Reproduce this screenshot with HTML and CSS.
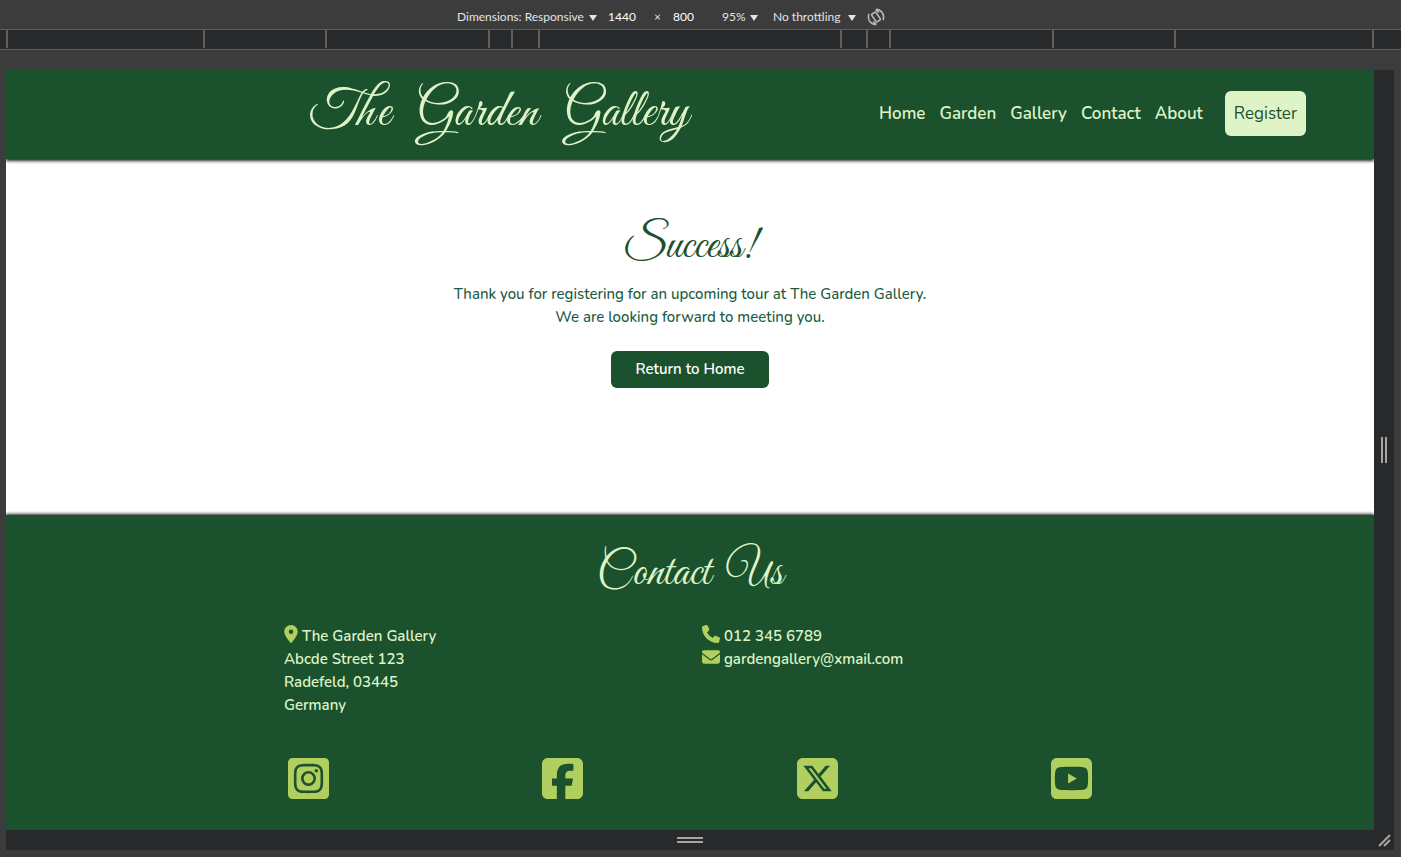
FILE: index.html
```html
<!DOCTYPE html>
<html lang="en">
<head>
<meta charset="utf-8">
<meta name="viewport" content="width=device-width, initial-scale=1">
<title>The Garden Gallery</title>
<link rel="stylesheet" href="styles.css">
</head>
<body>
<div class="toolbar">
  <label class="picker"><select aria-label="Device"><option>Dimensions: Responsive</option></select><svg class="caret" viewBox="0 0 8 6"><path d="M0 0h8L4 6z"/></svg></label>
  <input class="size" type="text" aria-label="Width" value="1440">
  <span class="times">×</span>
  <input class="size" type="text" aria-label="Height" value="800">
  <label class="picker picker-zoom"><select aria-label="Zoom"><option>95%</option></select><svg class="caret" viewBox="0 0 8 6"><path d="M0 0h8L4 6z"/></svg></label>
  <label class="picker"><select aria-label="Throttling"><option>No throttling</option></select><svg class="caret" viewBox="0 0 8 6"><path d="M0 0h8L4 6z"/></svg></label>
  <button class="rotate" type="button" aria-label="Rotate">
    <svg viewBox="0 0 20 20" fill="none" stroke="currentColor" stroke-width="1.8"><rect x="7.200" y="4.800" width="5.600" height="10.400" rx="1.200" transform="rotate(-35 10 10)"/><path d="M10 1.500c4.700 0 8.500 3.800 8.500 8.500 0 1.300-.3 2.500-.8 3.500M10 18.500c-4.700 0-8.500-3.800-8.500-8.500 0-1.300.3-2.500.8-3.500M13 5 9.600 1.600M7 15l3.400 3.400"/></svg>
  </button>
</div>
<div class="ruler"><i></i><i></i><i></i><i></i><i></i><i></i><i></i><i></i><i></i><i></i><i></i></div>

<div class="stage">
  <div class="site">
    <header class="header">
      <p class="brand">The&nbsp;&nbsp; Garden&nbsp;&nbsp; Gallery</p>
      <nav class="nav">
        <a href="#">Home</a>
        <a href="#">Garden</a>
        <a href="#">Gallery</a>
        <a href="#">Contact</a>
        <a href="#">About</a>
        <a class="register" href="#">Register</a>
      </nav>
    </header>
    <main class="main">
      <h1 class="heading">Success!</h1>
      <p class="message">Thank you for registering for an upcoming tour at The Garden Gallery.<br>We are looking forward to meeting you.</p>
      <a class="return" href="#">Return to Home</a>
    </main>
    <footer class="footer">
      <h2 class="heading">Contact&nbsp; Us</h2>
      <div class="details">
        <address>
          <svg class="pin" viewBox="0 0 384 512"><path d="M215.700 499.200C267 435 384 279.400 384 192C384 86 298 0 192 0S0 86 0 192c0 87.400 117 243 168.300 307.200c12.300 15.300 35.100 15.300 47.400 0zM192 128a64 64 0 1 1 0 128 64 64 0 1 1 0-128z"/></svg>
          The Garden Gallery<br>Abcde Street 123<br>Radefeld, 03445<br>Germany
        </address>
        <address>
          <svg viewBox="0 0 512 512"><path d="M164.900 24.600c-7.700-18.600-28-28.500-47.400-23.200l-88 24C12.100 30.200 0 46 0 64C0 311.400 200.600 512 448 512c18 0 33.800-12.100 38.600-29.500l24-88c5.300-19.400-4.600-39.700-23.200-47.400l-96-40c-16.300-6.800-35.200-2.100-46.300 11.600L304.700 368C234.300 334.700 177.300 277.700 144 207.300L193.300 167c13.700-11.200 18.400-30 11.600-46.300l-40-96z"/></svg>
          012 345 6789<br>
          <svg viewBox="0 0 512 512"><path d="M48 64C21.500 64 0 85.500 0 112c0 15.100 7.100 29.300 19.200 38.400L236.800 313.600c11.400 8.500 27 8.500 38.400 0L492.800 150.400c12.100-9.100 19.200-23.300 19.200-38.400c0-26.500-21.500-48-48-48L48 64zM0 176L0 384c0 35.300 28.700 64 64 64l384 0c35.300 0 64-28.700 64-64l0-208L294.400 339.200c-22.800 17.100-54 17.100-76.800 0L0 176z"/></svg>
          gardengallery@xmail.com
        </address>
      </div>
      <div class="social">
        <a href="#" aria-label="Instagram"><svg viewBox="0 32 448 448"><path d="M224 202.700A53.300 53.300 0 1 0 277.400 256 53.400 53.400 0 0 0 224 202.700zm124.700-41a54 54 0 0 0-30.400-30.400c-21-8.300-71-6.400-94.300-6.400s-73.200-1.900-94.300 6.400a54 54 0 0 0-30.400 30.400c-8.300 21-6.400 71.100-6.400 94.300s-1.900 73.300 6.400 94.300a54 54 0 0 0 30.400 30.400c21 8.300 71 6.400 94.300 6.400s73.200 1.900 94.300-6.400a54 54 0 0 0 30.400-30.400c8.400-21 6.400-71.100 6.400-94.300s1.900-73.200-6.400-94.300zM224 338a82 82 0 1 1 82-82 81.900 81.900 0 0 1-82 82zm85.400-148.300a19.100 19.100 0 1 1 19.100-19.100 19.100 19.100 0 0 1-19.100 19.100zM400 32H48A48 48 0 0 0 0 80v352a48 48 0 0 0 48 48h352a48 48 0 0 0 48-48V80a48 48 0 0 0-48-48zm-17.100 290c-1.300 25.600-7.100 48.300-25.900 67s-41.400 24.600-67 25.900c-26.400 1.500-105.600 1.500-132 0-25.600-1.300-48.300-7.200-67-25.900s-24.600-41.400-25.900-67c-1.500-26.400-1.500-105.600 0-132 1.300-25.600 7.100-48.300 25.900-67s41.500-24.600 67-25.800c26.400-1.500 105.600-1.500 132 0 25.600 1.300 48.300 7.100 67 25.900s24.600 41.400 25.900 67c1.500 26.300 1.500 105.400 0 131.900z"/></svg></a>
        <a href="#" aria-label="Facebook"><svg viewBox="0 32 448 448"><path d="M64 32C28.700 32 0 60.700 0 96V416c0 35.300 28.700 64 64 64h98.200V334.200H109.400V256h52.800V222.300c0-87.100 39.400-127.500 125-127.500c16.200 0 44.200 3.200 55.700 6.400V172c-6-.6-16.500-1-29.600-1c-42 0-58.200 15.900-58.200 57.200V256h83.600l-14.400 78.200H255V480H384c35.300 0 64-28.700 64-64V96c0-35.300-28.700-64-64-64H64z"/></svg></a>
        <a href="#" aria-label="X"><svg viewBox="0 32 448 448"><path d="M64 32C28.700 32 0 60.700 0 96V416c0 35.300 28.700 64 64 64H384c35.300 0 64-28.700 64-64V96c0-35.300-28.700-64-64-64H64zm297.100 84L257.300 234.600 379.400 396H283.800L209 298.100 123.300 396H75.800l111-126.900L69.700 116h98l67.700 89.500L313.600 116h47.500zM323.300 367.600L153.400 142.900H125.100L296.900 367.600h26.300z"/></svg></a>
        <a href="#" aria-label="YouTube"><svg viewBox="0 32 448 448"><path d="M282 256.200l-95.200-54.100V310.300L282 256.200zM384 32H64C28.700 32 0 60.700 0 96V416c0 35.300 28.700 64 64 64H384c35.300 0 64-28.700 64-64V96c0-35.300-28.700-64-64-64zm14.400 136.100c7.600 28.600 7.600 88.200 7.600 88.200s0 59.600-7.600 88.100c-4.200 15.800-16.500 27.700-32.200 31.900C337.900 384 224 384 224 384s-113.900 0-142.200-7.600c-15.700-4.200-28-16.100-32.200-31.900C42 315.900 42 256.300 42 256.300s0-59.700 7.600-88.200c4.200-15.800 16.500-28.200 32.200-32.400C110.100 128 224 128 224 128s113.900 0 142.200 7.700c15.700 4.200 28 16.600 32.200 32.400z"/></svg></a>
      </div>
    </footer>
  </div>
  <div class="grip grip-right"></div>
  <div class="grip grip-bottom"></div>
  <svg class="corner" viewBox="0 0 20 20" stroke="#a6a6a6" stroke-width="2"><path d="M5 16 16 5M10 16l6-6"/></svg>
</div>
</body>
</html>
```

FILE: styles.css
```css
:root {
  --green: #1b512d;
  --pale: #def4c6;
  --lime: #b1cf5f;
  --chrome: #3c3c3c;
  --dark: #28292b;
  --line: #5e5e5e;
  --script: "Great Vibes", "Liberation Serif", cursive;
  --sans: "Nunito", Lato, sans-serif;
}

* { box-sizing: border-box; }

body {
  display: flex;
  flex-direction: column;
  min-height: 100vh;
  margin: 0;
  background: var(--chrome);
  font: 15px/23px var(--sans);
}

p, h1, h2 { margin: 0; }
a { color: inherit; text-decoration: none; }

.toolbar {
  display: grid;
  grid-template-columns: 151px 46px 19px 49px 51px 94px 20px;
  justify-content: center;
  align-items: center;
  height: 29px;
  margin-right: 57px;
  padding-top: 4px;
  color: #e3e3e3;
  font: 12px/20px "Segoe UI", Lato, sans-serif;
}

.picker { position: relative; padding-right: 11px; }
.picker select {
  width: 100%;
  padding: 0;
  border: 0;
  appearance: none;
  background: none;
  color: inherit;
  font: inherit;
}
.caret {
  position: absolute;
  top: 8px;
  right: 11px;
  width: 8px;
  height: 6px;
  fill: #e3e3e3;
  pointer-events: none;
}
.picker-zoom .caret { right: 15px; }
.size {
  width: 40px;
  padding: 0;
  border: 0;
  background: none;
  color: #fff;
  font: inherit;
}
.rotate {
  display: flex;
  padding: 0;
  border: 0;
  background: none;
  color: #b8b8b8;
}
.rotate svg { width: 18px; height: 18px; }

.ruler {
  display: grid;
  grid-template-columns: 197fr 122fr 163fr 23fr 27fr 302fr 26fr 23fr 163fr 122fr 200fr;
  height: 21px;
  padding: 0 27px 1px 6px;
  border: solid var(--line);
  border-width: 1px 0;
  background: var(--dark);
}
.ruler i { border-left: 2px solid var(--line); }
.ruler i:last-child { border-right: 2px solid var(--line); }

.stage {
  display: grid;
  flex: 1;
  grid-template: 1fr 20px / 1fr 20px;
  margin: 20px 7px 7px 6px;
  background: var(--dark);
}
.site { display: flex; flex-direction: column; background: #fff; }

.header {
  display: flex;
  align-items: center;
  justify-content: space-between;
  min-height: 89px;
  padding: 0 68px 2px 304px;
  background: var(--green);
  box-shadow: 0 2px 3px #222;
  color: var(--pale);
  clip-path: inset(0 0 -6px 0);
}
.brand { font: 52px/66px var(--script); white-space: nowrap; }
.nav { display: flex; align-items: center; gap: 14px; font-size: 17px; font-weight: 600; }
.register {
  margin-left: 8px;
  padding: 11px 9px;
  border-radius: 6px;
  background: var(--pale);
  color: var(--green);
  font-weight: 400;
}

.heading { font: 46px/60px var(--script); text-align: center; }

.main {
  display: flex;
  flex: 1;
  flex-direction: column;
  align-items: center;
  padding: 58px 20px;
  color: var(--green);
}
.message { margin: 6px 0 22px; color: #1a5c42; font-weight: 500; text-align: center; }
.return {
  padding: 7px 24px;
  border-radius: 6px;
  background: var(--green);
  color: #fff;
  font-weight: 600;
}

.footer {
  padding: 29px 20px 31px;
  background: var(--green);
  box-shadow: 0 -1px 3px #222;
  color: var(--pale);
  clip-path: inset(-6px 0 0 0);
}
.details {
  display: grid;
  grid-template-columns: 1fr 1fr;
  max-width: 836px;
  margin: 21px auto 41px;
}
.details address { padding: 0 12px; font-style: normal; font-weight: 600; }
.details svg {
  width: 18px;
  height: 18px;
  fill: var(--lime);
  vertical-align: -2px;
}
.details .pin { width: 14px; }

.social {
  display: grid;
  grid-template-columns: repeat(4, 1fr);
  justify-items: center;
  max-width: 1017px;
  margin: 0 auto;
}
.social a { display: flex; }
.social svg { width: 41px; height: 41px; fill: var(--lime); }

.grip { place-self: center; border: solid #a6a6a6; }
.grip-right { width: 6px; height: 26px; border-width: 0 2px; }
.grip-bottom { width: 26px; height: 6px; border-width: 2px 0; }
.corner { width: 20px; height: 20px; }
```
